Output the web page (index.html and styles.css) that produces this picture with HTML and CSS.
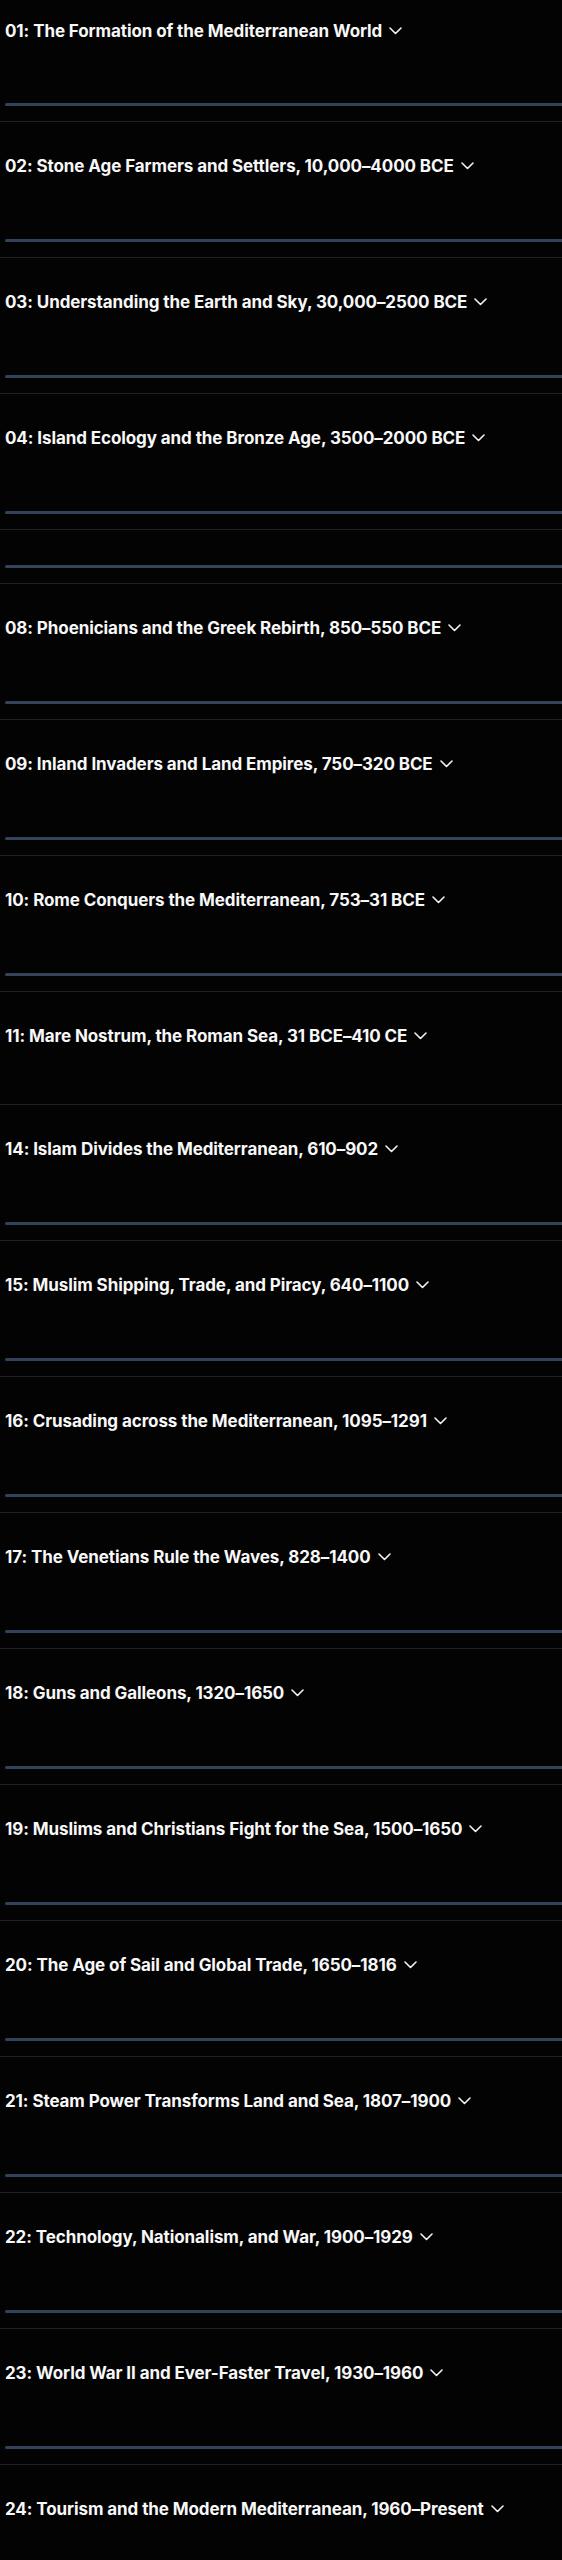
FILE: index.html
```html
<!DOCTYPE html>
<html lang="en">
<head>
<meta charset="utf-8">
<title>Chapters</title>
<link rel="stylesheet" href="styles.css">
</head>
<body>
<main class="chapters">
  <section class="chapter first">
    <button class="head"><span class="title">01: The Formation of the Mediterranean World</span><svg class="chev" viewBox="0 0 13 8" width="13" height="8"><polyline points="1,1 6.5,6.5 12,1"/></svg></button>
    <div class="bar"></div>
  </section>
  <section class="chapter">
    <button class="head"><span class="title">02: Stone Age Farmers and Settlers, 10,000–4000 BCE</span><svg class="chev" viewBox="0 0 13 8" width="13" height="8"><polyline points="1,1 6.5,6.5 12,1"/></svg></button>
    <div class="bar"></div>
  </section>
  <section class="chapter">
    <button class="head"><span class="title">03: Understanding the Earth and Sky, 30,000–2500 BCE</span><svg class="chev" viewBox="0 0 13 8" width="13" height="8"><polyline points="1,1 6.5,6.5 12,1"/></svg></button>
    <div class="bar"></div>
  </section>
  <section class="chapter">
    <button class="head"><span class="title">04: Island Ecology and the Bronze Age, 3500–2000 BCE</span><svg class="chev" viewBox="0 0 13 8" width="13" height="8"><polyline points="1,1 6.5,6.5 12,1"/></svg></button>
    <div class="bar"></div>
  </section>
  <section class="chapter empty">
    <div class="bar"></div>
  </section>
  <section class="chapter">
    <button class="head"><span class="title">08: Phoenicians and the Greek Rebirth, 850–550 BCE</span><svg class="chev" viewBox="0 0 13 8" width="13" height="8"><polyline points="1,1 6.5,6.5 12,1"/></svg></button>
    <div class="bar"></div>
  </section>
  <section class="chapter">
    <button class="head"><span class="title">09: Inland Invaders and Land Empires, 750–320 BCE</span><svg class="chev" viewBox="0 0 13 8" width="13" height="8"><polyline points="1,1 6.5,6.5 12,1"/></svg></button>
    <div class="bar"></div>
  </section>
  <section class="chapter">
    <button class="head"><span class="title">10: Rome Conquers the Mediterranean, 753–31 BCE</span><svg class="chev" viewBox="0 0 13 8" width="13" height="8"><polyline points="1,1 6.5,6.5 12,1"/></svg></button>
    <div class="bar"></div>
  </section>
  <section class="chapter nobar">
    <button class="head"><span class="title">11: Mare Nostrum, the Roman Sea, 31 BCE–410 CE</span><svg class="chev" viewBox="0 0 13 8" width="13" height="8"><polyline points="1,1 6.5,6.5 12,1"/></svg></button>
  </section>
  <section class="chapter">
    <button class="head"><span class="title">14: Islam Divides the Mediterranean, 610–902</span><svg class="chev" viewBox="0 0 13 8" width="13" height="8"><polyline points="1,1 6.5,6.5 12,1"/></svg></button>
    <div class="bar"></div>
  </section>
  <section class="chapter">
    <button class="head"><span class="title">15: Muslim Shipping, Trade, and Piracy, 640–1100</span><svg class="chev" viewBox="0 0 13 8" width="13" height="8"><polyline points="1,1 6.5,6.5 12,1"/></svg></button>
    <div class="bar"></div>
  </section>
  <section class="chapter">
    <button class="head"><span class="title">16: Crusading across the Mediterranean, 1095–1291</span><svg class="chev" viewBox="0 0 13 8" width="13" height="8"><polyline points="1,1 6.5,6.5 12,1"/></svg></button>
    <div class="bar"></div>
  </section>
  <section class="chapter">
    <button class="head"><span class="title">17: The Venetians Rule the Waves, 828–1400</span><svg class="chev" viewBox="0 0 13 8" width="13" height="8"><polyline points="1,1 6.5,6.5 12,1"/></svg></button>
    <div class="bar"></div>
  </section>
  <section class="chapter">
    <button class="head"><span class="title">18: Guns and Galleons, 1320–1650</span><svg class="chev" viewBox="0 0 13 8" width="13" height="8"><polyline points="1,1 6.5,6.5 12,1"/></svg></button>
    <div class="bar"></div>
  </section>
  <section class="chapter">
    <button class="head"><span class="title">19: Muslims and Christians Fight for the Sea, 1500–1650</span><svg class="chev" viewBox="0 0 13 8" width="13" height="8"><polyline points="1,1 6.5,6.5 12,1"/></svg></button>
    <div class="bar"></div>
  </section>
  <section class="chapter">
    <button class="head"><span class="title">20: The Age of Sail and Global Trade, 1650–1816</span><svg class="chev" viewBox="0 0 13 8" width="13" height="8"><polyline points="1,1 6.5,6.5 12,1"/></svg></button>
    <div class="bar"></div>
  </section>
  <section class="chapter">
    <button class="head"><span class="title">21: Steam Power Transforms Land and Sea, 1807–1900</span><svg class="chev" viewBox="0 0 13 8" width="13" height="8"><polyline points="1,1 6.5,6.5 12,1"/></svg></button>
    <div class="bar"></div>
  </section>
  <section class="chapter">
    <button class="head"><span class="title">22: Technology, Nationalism, and War, 1900–1929</span><svg class="chev" viewBox="0 0 13 8" width="13" height="8"><polyline points="1,1 6.5,6.5 12,1"/></svg></button>
    <div class="bar"></div>
  </section>
  <section class="chapter">
    <button class="head"><span class="title">23: World War II and Ever-Faster Travel, 1930–1960</span><svg class="chev" viewBox="0 0 13 8" width="13" height="8"><polyline points="1,1 6.5,6.5 12,1"/></svg></button>
    <div class="bar"></div>
  </section>
  <section class="chapter">
    <button class="head"><span class="title">24: Tourism and the Modern Mediterranean, 1960–Present</span><svg class="chev" viewBox="0 0 13 8" width="13" height="8"><polyline points="1,1 6.5,6.5 12,1"/></svg></button>
    <div class="bar"></div>
  </section>
</main>
</body>
</html>
```
FILE: styles.css
```css
html, body {
  margin: 0;
  padding: 0;
  background: #030304;
}
.chapters {
  display: flex;
  flex-direction: column;
}
.chapter {
  display: flex;
  flex-direction: column;
  padding-bottom: 15px;
  border-bottom: 1px solid #1c2129;
}
.head {
  display: flex;
  align-items: center;
  gap: 7px;
  margin: 0;
  padding: 34px 5px;
  border: 0;
  background: none;
  color: #f8f8f8;
  font-family: "Inter", "Liberation Sans", sans-serif;
  font-weight: 700;
  font-size: 17px;
  letter-spacing: -0.09px;
  line-height: 20px;
  text-align: left;
  cursor: pointer;
}
.title {
  white-space: nowrap;
}
.chev {
  flex: none;
  margin-top: -1px;
  fill: none;
  stroke: #f2f2f2;
  stroke-width: 1.6;
  stroke-linecap: round;
  stroke-linejoin: round;
}
.bar {
  height: 3px;
  margin: 29px 0 0 5px;
  border-radius: 2px 0 0 2px;
  background: #33435a;
}
.first .head {
  padding-top: 21px;
}
.first .bar {
  margin-top: 28px;
}
.empty .bar {
  margin-top: 35px;
}
.nobar {
  padding-bottom: 24px;
}
```
